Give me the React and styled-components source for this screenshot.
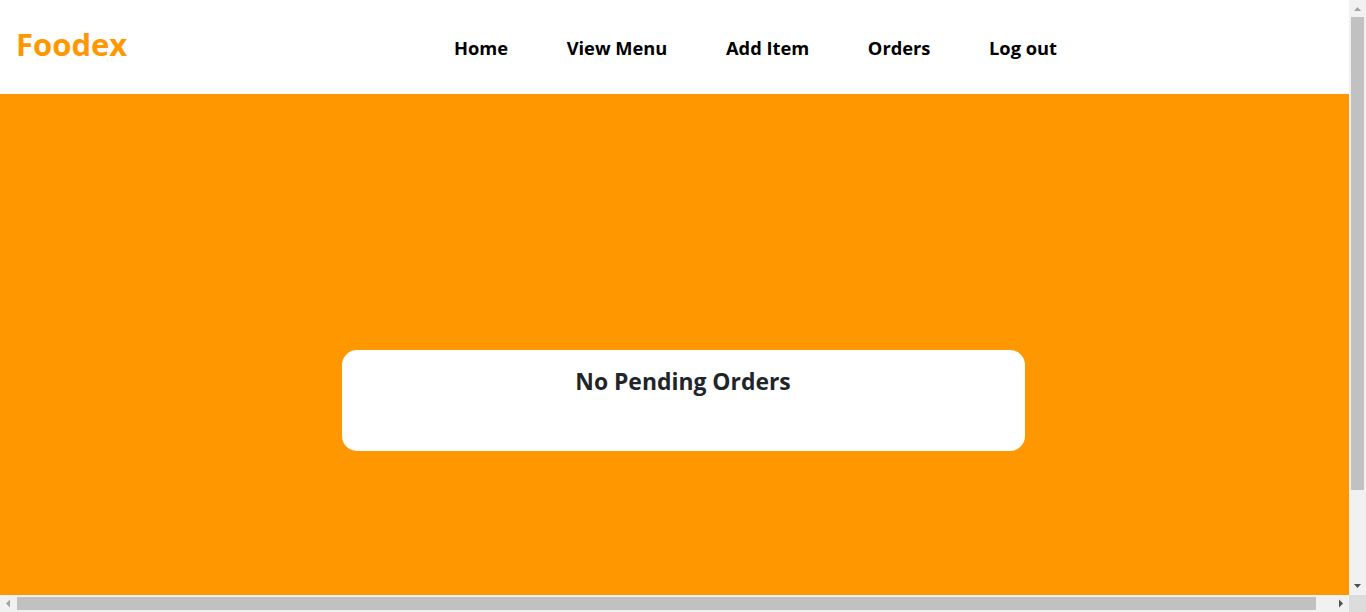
import React from "react";
import styled, { createGlobalStyle } from "styled-components";

const Global = createGlobalStyle`
  * { box-sizing: border-box; }
  html, body { margin: 0; }
  body {
    font-family: "Open Sans", "Noto Sans", sans-serif;
    background: #fff;
  }
`;

const Page = styled.div`
  height: 100vh;
  overflow: hidden;
`;

const Header = styled.header`
  display: flex;
  align-items: center;
  height: 94px;
  width: 100vw;
  padding: 0 0 0 16px;
  background: #ffffff;
`;

const Logo = styled.div`
  font-size: 31px;
  font-weight: 700;
  color: #ff9800;
  width: 438px;
  margin-top: -6px;
`;

const Nav = styled.nav`
  display: flex;
  gap: 58.6px;
  margin-top: 1px;
`;

const NavLink = styled.a`
  font-size: 18.3px;
  font-weight: 700;
  color: #000;
  text-decoration: none;
  cursor: pointer;
`;

const Section = styled.section`
  width: 100vw;
  height: 100vh;
  background: #ff9800;
  display: flex;
  align-items: center;
  justify-content: center;
`;

const Card = styled.div`
  width: 50%;
  height: 101px;
  background: #fff;
  border-radius: 15px;
  padding: 16px;
  display: flex;
  flex-direction: column;
  align-items: center;
`;

const Title = styled.h2`
  margin: 0;
  font-size: 22.9px;
  font-weight: 700;
  color: #212529;
`;

/* Browser scrollbars, drawn over the page */
const VBar = styled.div`
  position: fixed;
  top: 0;
  right: 0;
  width: 17px;
  bottom: 17px;
  background: #f1f1f1;
  display: flex;
  flex-direction: column;
`;

const HBar = styled.div`
  position: fixed;
  left: 0;
  bottom: 0;
  right: 17px;
  height: 17px;
  background: #f1f1f1;
  display: flex;
`;

const Corner = styled.div`
  position: fixed;
  right: 0;
  bottom: 0;
  width: 17px;
  height: 17px;
  background: #dcdcdc;
`;

const Track = styled.div`
  flex: 1;
  display: flex;
  flex-direction: ${(p) => (p.$vertical ? "column" : "row")};
  padding: ${(p) => (p.$vertical ? "0 2px" : "2px 0")};
`;

const Thumb = styled.div`
  background: #c1c1c1;
  flex: 0 0 ${(p) => p.$size}px;
`;

const ArrowBtn = styled.svg`
  display: block;
  flex: 0 0 17px;
  width: 17px;
  height: 17px;
`;

const Arrow = ({ points, color }) => (
  <ArrowBtn viewBox="0 0 17 17">
    <polygon points={points} fill={color} />
  </ArrowBtn>
);

export default function App() {
  return (
    <Page>
      <Global />
      <Header>
        <Logo>Foodex</Logo>
        <Nav>
          <NavLink>Home</NavLink>
          <NavLink>View Menu</NavLink>
          <NavLink>Add Item</NavLink>
          <NavLink>Orders</NavLink>
          <NavLink>Log out</NavLink>
        </Nav>
      </Header>
      <Section>
        <Card>
          <Title>No Pending Orders</Title>
        </Card>
      </Section>

      <VBar>
        <Arrow points="5,11 12,11 8.5,7" color="#a3a3a3" />
        <Track $vertical>
          <Thumb $size={473} />
        </Track>
        <Arrow points="5,6 12,6 8.5,10" color="#505050" />
      </VBar>
      <HBar>
        <Arrow points="6,8.5 10,4.5 10,12.5" color="#a3a3a3" />
        <Track>
          <Thumb $size={1299} />
        </Track>
        <Arrow points="11,8.5 7,4.5 7,12.5" color="#505050" />
      </HBar>
      <Corner />
    </Page>
  );
}
